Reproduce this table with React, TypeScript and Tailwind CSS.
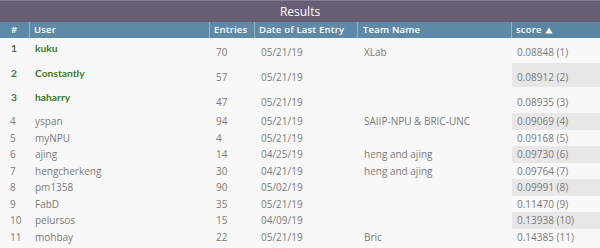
import React from "react";

type Row = { rank: number; user: string; entries: string; date: string; team: string; score: string };

const rows: Row[] = [
  { rank: 1, user: "kuku", entries: "70", date: "05/21/19", team: "XLab", score: "0.08848 (1)" },
  { rank: 2, user: "Constantly", entries: "57", date: "05/21/19", team: "", score: "0.08912 (2)" },
  { rank: 3, user: "haharry", entries: "47", date: "05/21/19", team: "", score: "0.08935 (3)" },
  { rank: 4, user: "yspan", entries: "94", date: "05/21/19", team: "SAIIP-NPU & BRIC-UNC", score: "0.09069 (4)" },
  { rank: 5, user: "myNPU", entries: "4", date: "05/21/19", team: "", score: "0.09168 (5)" },
  { rank: 6, user: "ajing", entries: "14", date: "04/25/19", team: "heng and ajing", score: "0.09730 (6)" },
  { rank: 7, user: "hengcherkeng", entries: "30", date: "04/21/19", team: "heng and ajing", score: "0.09764 (7)" },
  { rank: 8, user: "pm1358", entries: "90", date: "05/02/19", team: "", score: "0.09991 (8)" },
  { rank: 9, user: "FabD", entries: "35", date: "05/21/19", team: "", score: "0.11470 (9)" },
  { rank: 10, user: "pelursos", entries: "15", date: "04/09/19", team: "", score: "0.13938 (10)" },
  { rank: 11, user: "mohbay", entries: "22", date: "05/21/19", team: "Bric", score: "0.14385 (11)" },
];

const heights = ["h-[25px]", "h-[24px]", "h-[26px]", "h-[17px]", "h-[16px]", "h-[17px]", "h-[16px]", "h-[17px]", "h-[16px]", "h-[17px]", "h-[17px]"];

const cols = "grid grid-cols-[30px_180px_45px_103px_154px_88px]";

export default function App() {
  return (
    <div
      className="w-[600px] h-[248px] overflow-hidden bg-[#f8f8f8]"
      style={{ fontFamily: '"Open Sans", "Noto Sans", sans-serif' }}
    >
      <div className="h-[22px] bg-[#675d75] border-t border-[#857c92] flex items-center justify-center text-white text-[12px]">
        Results
      </div>
      <div className={`${cols} h-[16px] bg-[#5e8aa8] text-white text-[9.5px] font-semibold tracking-[0.2px]`}>
        <div className="flex items-center pl-[11px] border-r border-[#93b3c9]">#</div>
        <div className="flex items-center pl-[4px] border-r border-[#93b3c9]">User</div>
        <div className="flex items-center pl-[4px] border-r border-[#93b3c9]">Entries</div>
        <div className="flex items-center pl-[4px] border-r border-[#93b3c9]">Date of Last Entry</div>
        <div className="flex items-center pl-[5px] border-r border-[#93b3c9]">Team Name</div>
        <div className="flex items-center pl-[4px] bg-[#5a86a4] gap-[3px]">
          score
          <svg width="8" height="7" viewBox="0 0 8 7">
            <path d="M4 0.5 L7.6 6.5 L0.4 6.5 Z" fill="white" />
          </svg>
        </div>
      </div>
      {rows.map((r, i) => {
        const top = r.rank <= 3;
        const even = r.rank % 2 === 0;
        const cell = top ? "flex items-center pt-[4px]" : "flex items-center";
        const green = "font-bold text-[#3d7b27] text-[10.3px]";
        return (
          <div key={r.rank} className={`${cols} ${heights[i]} text-[10px] text-[#7a7a7a]`}>
            <div
              className={top ? `flex items-start pt-[3px] pl-[11px] ${green}` : "flex items-center pl-[10px]"}
              style={top ? { fontFamily: "Lato, sans-serif" } : undefined}
            >
              {r.rank}
            </div>
            <div
              className={top ? `flex items-start pt-[3px] pl-[5px] ${green}` : "flex items-center pl-[5px]"}
              style={top ? { fontFamily: "Lato, sans-serif" } : undefined}
            >
              {r.user}
            </div>
            <div className={`${cell} pl-[6px]`}>{r.entries}</div>
            <div className={`${cell} pl-[6px]`}>{r.date}</div>
            <div className={`${cell} pl-[6px]`}>{r.team}</div>
            <div className={`${cell} pl-[5px] ${even ? "bg-[#e7e7e7]" : ""}`}>{r.score}</div>
          </div>
        );
      })}
    </div>
  );
}
